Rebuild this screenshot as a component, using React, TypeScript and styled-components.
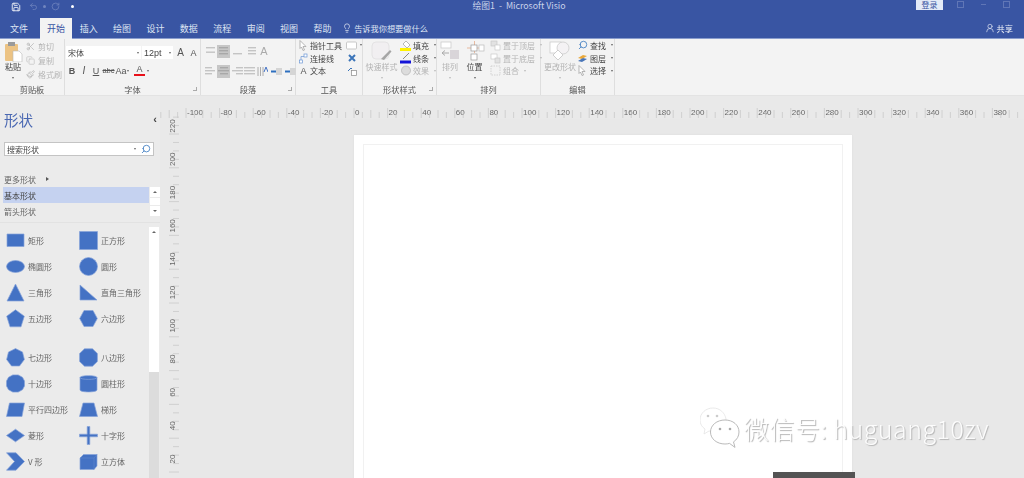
import React from 'react';
import styled, { createGlobalStyle } from 'styled-components';
import { Copy, Lightbulb, Paintbrush, RotateCw, Save, Scissors, Search, Undo2, UserRound } from 'lucide-react';

const Global = createGlobalStyle`
  html, body { margin: 0; padding: 0; background: #e8e8e8; }
  body { font-family: "Noto Sans CJK SC", "Noto Sans", sans-serif; overflow: hidden; }
`;

const Frame = styled.div`
  position: relative;
  width: 1024px;
  height: 478px;
  overflow: hidden;
  filter: blur(0.45px);
`;

// title bar
const TitleBar = styled.div`
  height: 18px;
  background: #3955a3;
  display: grid;
  grid-template-columns: 1fr auto 1fr;
  color: #fff;
`;
const Qat = styled.div`
  display: flex;
  align-items: center;
  gap: 5px;
  padding: 0 0 5px 11px;
`;
const QatDot = styled.span<{ $dim?: boolean; $ml?: number }>`
  width: 3px;
  height: 3px;
  margin-left: ${p => p.$ml ?? 0}px;
  border-radius: 50%;
  background: ${p => (p.$dim ? '#7186bf' : '#fff')};
`;
const SaveIcon = styled(Save)`
  margin-right: 3px;
`;
const Title = styled.div`
  padding-left: 14px;
  font-size: 8.8px;
  line-height: 11px;
  color: #c9d3ea;
  white-space: pre;
`;
const WindowBar = styled.div`
  display: flex;
  justify-content: flex-end;
  align-items: flex-start;
  padding-right: 6.5px;
`;
const Login = styled.div`
  width: 27px;
  height: 10px;
  margin-right: 5.5px;
  background: #e3eaf7;
  color: #3955a3;
  font-size: 8px;
  line-height: 10px;
  text-align: center;
`;
const WinBtn = styled.div`
  width: 23px;
  height: 8px;
  display: flex;
  justify-content: center;
  align-items: center;
`;
const WinGlyph = styled.span<{ $flat?: boolean }>`
  width: 5px;
  height: ${p => (p.$flat ? '0' : '5px')};
  border: 1px solid #6076b6;
  border-width: ${p => (p.$flat ? '1px 0 0' : '1px')};
`;

// tabs
const TabBar = styled.div`
  height: 20px;
  background: #3955a3;
  border-bottom: 1px solid #8a9dcd;
  display: flex;
  align-items: stretch;
  color: #dfe5f3;
  font-size: 9px;
`;
const Tab = styled.div<{ $active?: boolean; $w?: number }>`
  width: ${p => p.$w ?? 33.4}px;
  display: flex;
  align-items: center;
  justify-content: center;
  background: ${p => (p.$active ? '#f3f3f3' : 'transparent')};
  color: ${p => (p.$active ? '#3955a3' : '#dfe5f3')};
  margin-left: ${p => (p.$active ? '2px' : '0')};
  margin-bottom: ${p => (p.$active ? '-1px' : '0')};
`;
const Tell = styled.div`
  display: flex;
  align-items: center;
  gap: 2px;
  margin-left: 3px;
  color: #dfe5f3;
  font-size: 8.2px;
`;
const Share = styled.div`
  margin-left: auto;
  padding-right: 11px;
  display: flex;
  align-items: center;
  gap: 2px;
  font-size: 8.2px;
  color: #eef1f8;
`;

// ribbon
const Ribbon = styled.div`
  height: 57px;
  background: #f3f3f3;
  border-bottom: 1px solid #e3e3e3;
  box-sizing: border-box;
  display: flex;
`;
const GroupBox = styled.div<{ $w: number }>`
  position: relative;
  width: ${p => p.$w}px;
  flex: none;
  box-sizing: border-box;
  border-right: 1px solid #dedede;
  display: flex;
  flex-direction: column;
`;
const GroupBody = styled.div<{ $pad?: number; $gap?: number }>`
  height: 43px;
  padding-left: ${p => p.$pad ?? 0}px;
  display: flex;
  gap: ${p => p.$gap ?? 0}px;
`;
const GroupLabel = styled.div`
  flex: 1;
  display: flex;
  align-items: center;
  justify-content: center;
  font-size: 8.2px;
  color: #555;
`;
const Launcher = styled.span`
  position: absolute;
  right: 3px;
  bottom: 4px;
  width: 3px;
  height: 3px;
  border: solid #aaa;
  border-width: 0 1px 1px 0;
`;
const BigBtn = styled.div<{ $w: number; $off?: boolean }>`
  width: ${p => p.$w}px;
  flex: none;
  padding-top: 2px;
  display: flex;
  flex-direction: column;
  align-items: center;
  font-size: 8px;
  line-height: 10px;
  color: ${p => (p.$off ? '#b3b3b3' : '#444')};
  white-space: nowrap;
`;
const BigIcon = styled.div`
  height: 20px;
  margin-bottom: 1px;
  display: flex;
  align-items: center;
`;
const Caret = styled.span<{ $off?: boolean }>`
  width: 0;
  height: 0;
  margin-top: 5px;
  border: 1.5px solid transparent;
  border-top: 2px solid ${p => (p.$off ? '#bbb' : '#666')};
  border-bottom: 0;
`;
const SideCaret = styled(Caret)`
  margin: 0 0 0 3px;
`;
const InlineCaret = styled(Caret)`
  margin-top: 0;
`;
const SmallCol = styled.div<{ $rowH?: number; $w?: number; $ml?: number }>`
  --row: ${p => p.$rowH ?? 12.8}px;
  width: ${p => (p.$w ? `${p.$w}px` : 'auto')};
  margin-left: ${p => p.$ml ?? 0}px;
  flex: none;
  display: flex;
  flex-direction: column;
`;
const SmallRow = styled.div<{ $off?: boolean; $inset?: number }>`
  height: var(--row);
  padding-left: ${p => p.$inset ?? 0}px;
  display: flex;
  align-items: center;
  gap: 2px;
  font-size: 8px;
  white-space: nowrap;
  color: ${p => (p.$off ? '#b5b5b5' : '#444')};
`;
const IconCell = styled.span<{ $w?: number }>`
  width: ${p => p.$w ?? 11}px;
  height: 12px;
  flex: none;
  display: flex;
  align-items: center;
  justify-content: center;
`;
const MirrorSearch = styled(Search)`
  transform: scaleX(-1);
`;

// font group
const FontCol = styled.div`
  padding: 7px 0 0 1px;
  display: flex;
  flex-direction: column;
  gap: 5px;
`;
const FontRow = styled.div`
  height: 13px;
  display: flex;
  align-items: center;
`;
const Combo = styled.div<{ $w: number; $latin?: boolean }>`
  width: ${p => p.$w}px;
  height: 13px;
  margin-right: 1px;
  padding: 0 2px;
  box-sizing: border-box;
  background: #fff;
  display: flex;
  align-items: center;
  justify-content: space-between;
  font-family: ${p => (p.$latin ? '"Liberation Sans", sans-serif' : 'inherit')};
  font-size: ${p => (p.$latin ? 9 : 8)}px;
  color: #444;
`;
const Glyph = styled.span<{ $w: number; $b?: boolean; $i?: boolean; $u?: boolean; $s?: boolean; $size?: number; $off?: boolean }>`
  width: ${p => p.$w}px;
  flex: none;
  text-align: center;
  font-family: "Liberation Sans", sans-serif;
  font-size: ${p => p.$size ?? 9}px;
  font-weight: ${p => (p.$b ? 700 : 400)};
  font-style: ${p => (p.$i ? 'italic' : 'normal')};
  text-decoration: ${p => (p.$u ? 'underline' : p.$s ? 'line-through' : 'none')};
  color: ${p => (p.$off ? '#aaa' : '#555')};
`;
const ColorA = styled.span`
  width: 11px;
  margin: 0 2px 0 5px;
  display: flex;
  flex-direction: column;
  align-items: center;
  font: 9px/9px "Liberation Sans", sans-serif;
  color: #555;
  border-bottom: 2px solid #e8111a;
`;

// paragraph group
const ParaCol = styled.div`
  padding: 5px 0 0 3px;
  display: flex;
  flex-direction: column;
  gap: 6px;
`;
const ParaRow = styled.div`
  height: 14px;
  display: flex;
  align-items: center;
  gap: 1px;
`;
const ParaBtn = styled.span<{ $on?: boolean; $w?: number }>`
  width: ${p => p.$w ?? 12}px;
  height: 13px;
  flex: none;
  display: flex;
  align-items: center;
  justify-content: center;
  background: ${p => (p.$on ? '#c6c6c6' : 'transparent')};
`;

// main area
const Main = styled.div`
  display: flex;
  height: 382px;
`;
const Sidebar = styled.aside`
  width: 160px;
  flex: none;
  background: #ebebeb;
  display: flex;
  flex-direction: column;
`;
const SideHead = styled.div`
  height: 46px;
  padding: 0 2px 0 4px;
  display: flex;
  justify-content: space-between;
  align-items: center;
  font-size: 14.5px;
  color: #4a68b2;
  box-sizing: border-box;
`;
const Collapse = styled.span`
  font: 700 11px "Liberation Sans", sans-serif;
  color: #444;
  padding-right: 1px;
`;
const SearchBox = styled.div`
  width: 150px;
  height: 14px;
  margin-left: 4px;
  box-sizing: border-box;
  padding: 0 2px;
  background: #fff;
  border: 1px solid #c4c4c4;
  display: flex;
  align-items: center;
  font-size: 8px;
  color: #444;
`;
const SearchCaret = styled(Caret)`
  margin: 0 5px 0 auto;
`;
const MoreRow = styled.div`
  height: 16px;
  margin-top: 15px;
  padding-left: 4px;
  display: flex;
  align-items: center;
  gap: 10px;
  font-size: 8px;
  color: #666;
`;
const SideArrow = styled.span`
  width: 0;
  height: 0;
  border: 2px solid transparent;
  border-left: 3px solid #555;
  border-right: 0;
`;
const StencilList = styled.div`
  height: 32px;
  display: flex;
`;
const StencilNames = styled.div`
  width: 146px;
  margin-left: 3px;
`;
const StencilName = styled.div<{ $on?: boolean }>`
  height: 16px;
  padding-left: 1px;
  display: flex;
  align-items: center;
  background: ${p => (p.$on ? '#c5d2f0' : 'transparent')};
  color: ${p => (p.$on ? '#444' : '#666')};
  font-size: 8px;
`;
const MiniScroll = styled.div`
  width: 10px;
  margin-left: 1px;
  height: 29px;
  display: flex;
  flex-direction: column;
  justify-content: space-between;
  background: linear-gradient(#fff, #fff) center / 100% 7px no-repeat;
`;
const ScrollBtn = styled.span`
  height: 10px;
  background: #fff;
  display: flex;
  align-items: center;
  justify-content: center;
`;
const Tri = styled.span<{ $down?: boolean }>`
  width: 0;
  height: 0;
  border: 2.5px solid transparent;
  ${p => (p.$down ? 'border-top: 2.5px solid #666; border-bottom: 0;' : 'border-bottom: 2.5px solid #666; border-top: 0;')}
`;
const ShapeArea = styled.div`
  margin-top: 3px;
  border-top: 1px solid #e2e2e2;
  padding-top: 4px;
  display: flex;
  flex: 1;
  min-height: 0;
`;
const ShapeGrid = styled.div`
  width: 149px;
  flex: none;
  margin-top: 1px;
`;
const ShapeSection = styled.div<{ $sep?: boolean }>`
  display: grid;
  grid-template-columns: 73px 73px;
  grid-auto-rows: 25.9px;
  padding-left: 6px;
  padding-bottom: ${p => (p.$sep ? '13px' : '0')};
`;
const ShapeItem = styled.div`
  display: flex;
  align-items: center;
  gap: 3px;
  font-size: 8px;
  color: #666;
  white-space: nowrap;
`;
const ShapeIcon = styled.svg`
  flex: none;
`;
const StencilScroll = styled.div`
  width: 10px;
  flex: none;
  background: linear-gradient(#fff 0 145px, #dcdcdc 145px);
`;
const Workspace = styled.div`
  flex: 1;
  display: flex;
  flex-direction: column;
  position: relative;
  background: #e9e9e9;
`;
const RulerTop = styled.svg`
  display: block;
  flex: none;
`;
const WorkRow = styled.div`
  flex: 1;
  display: flex;
  min-height: 0;
`;
const RulerLeft = styled.svg`
  display: block;
  flex: none;
  overflow: visible;
`;
const Canvas = styled.div`
  flex: 1;
  position: relative;
  padding: 16px 0 0 174px;
  background: #e8e8e8;
`;
const Page = styled.div`
  width: 498px;
  height: 400px;
  background: #fff;
  padding: 9px;
  box-sizing: border-box;
  box-shadow: 0 0 2px #dcdcdc;
`;
const PageInner = styled.div`
  height: 100%;
  border: 1px solid #f1f1f1;
`;
const DarkTip = styled.div`
  position: absolute;
  left: 593px;
  bottom: 0;
  width: 82px;
  height: 6px;
  background: #545454;
`;
const Watermark = styled.div`
  position: absolute;
  left: 700px;
  top: 406px;
  display: flex;
  align-items: center;
  gap: 4px;
  height: 44px;
`;
const WatermarkText = styled.span`
  font-family: "Noto Sans CJK SC", sans-serif;
  font-weight: 300;
  font-size: 25px;
  letter-spacing: 0.5px;
  color: rgba(255, 255, 255, 0.9);
  text-shadow: 1px 1px 1px #b4b4b4;
  white-space: nowrap;
`;

const BLUE = '#4472c4';
const EDGE = '#86a3da';

const Shape = ({ d, el }: { d?: string; el?: React.ReactNode }) => (
  <ShapeIcon width="19" height="19" viewBox="0 0 19 19">
    {d ? <path d={d} fill={BLUE} stroke={EDGE} strokeWidth="0.7" /> : el}
  </ShapeIcon>
);

const shapes: { name: string; d?: string; el?: React.ReactNode }[][] = [
  [
    { name: '矩形', d: 'M1 3h17v12.5H1z' },
    { name: '正方形', d: 'M.5 .5h18v18H.5z' },
    { name: '椭圆形', el: <ellipse cx="9.5" cy="9.5" rx="9" ry="6" fill={BLUE} stroke={EDGE} strokeWidth="0.7" /> },
    { name: '圆形', el: <circle cx="9.5" cy="9.5" r="9" fill={BLUE} stroke={EDGE} strokeWidth="0.7" /> },
    { name: '三角形', d: 'M9.5 1L18 18H1z' },
    { name: '直角三角形', d: 'M1 2L18 17H1z' },
    { name: '五边形', d: 'M9.5 .8L18.3 7.2 15 17.8H4L.7 7.2z' },
    { name: '六边形', d: 'M5 1.5H14L18.3 9.5 14 17.5H5L.7 9.5z' },
  ],
  [
    { name: '七边形', d: 'M9.5 .6L16.5 4 18.4 11.5 13.5 18H5.5L.6 11.5 2.5 4z' },
    { name: '八边形', d: 'M5.5 .8H13.5L18.4 5.5V13.5L13.5 18.2H5.5L.6 13.5V5.5z' },
    { name: '十边形', d: 'M6.8 .9H12.2L16.5 3.3 18.5 7V12L16.5 15.7 12.2 18.1H6.8L2.5 15.7 .5 12V7L2.5 3.3z' },
    { name: '圆柱形', el: <g fill={BLUE} stroke={EDGE} strokeWidth="0.7"><path d="M1 3.5C1 1 18 1 18 3.5V16C18 18.6 1 18.6 1 16z" /><path d="M1 3.5C1 6 18 6 18 3.5" fill="none" /></g> },
    { name: '平行四边形', d: 'M3.5 3H18.5L16 16.5H.5z' },
    { name: '梯形', d: 'M4 3H15L18.5 16.5H.5z' },
    { name: '菱形', d: 'M9.5 3.2L18.5 9.5 9.5 15.8 .5 9.5z' },
    { name: '十字形', d: 'M8.2 .5H10.8V8.2H18.5V10.8H10.8V18.5H8.2V10.8H.5V8.2H8.2z' },
    { name: 'V 形', d: 'M.5 .8L10 .8 18.5 9.5 10 18.2H.5L8.5 9.5z' },
    { name: '立方体', el: <g fill={BLUE} stroke={EDGE} strokeWidth="0.7"><path d="M1 6L4.5 2.5H18V14L15 17.5H1z" /><path d="M1 6H15V17.5M15 6L18 2.5" fill="none" stroke="#5d85cd" /></g> },
  ],
];

const Bars = ({ rows, color = '#c4c4c4' }: { rows: [number, number][]; color?: string }) => (
  <svg width="11" height="11" viewBox="0 0 11 11">
    {rows.map(([x, w], i) => (
      <rect key={i} x={x} y={1 + i * (9 / rows.length)} width={w} height="1.4" fill={color} />
    ))}
  </svg>
);

const Tiny = ({ children, w = 11, h = 11 }: { children: React.ReactNode; w?: number; h?: number }) => (
  <svg width={w} height={h} viewBox={`0 0 ${w} ${h}`}>{children}</svg>
);

const hTicks = () => {
  const out: React.ReactNode[] = [];
  for (let u = -115; u <= 395; u += 5) {
    const x = 194 + u * 1.68;
    const major = u % 20 === 0;
    const mid = u % 10 === 0;
    out.push(<line key={u} x1={x} x2={x} y1={major ? 12 : mid ? 14 : 16} y2={22} stroke="#c9c9c9" strokeWidth="0.8" />);
    if (major) {
      out.push(
        <text key={`t${u}`} x={x + 1} y={19} fontSize="8" fill="#666" fontFamily="Liberation Sans, sans-serif">
          {u}
        </text>,
      );
    }
  }
  return out;
};

const vTicks = () => {
  const out: React.ReactNode[] = [];
  for (let k = -2; k < 45; k++) {
    const y = 15 + k * 8.45;
    const major = k % 4 === 0;
    out.push(<line key={k} x1={major ? 9 : 13} x2={19} y1={y} y2={y} stroke="#c9c9c9" strokeWidth="0.8" />);
  }
  ['220', '200', '180', '160', '140', '120', '100', '80', '60', '40', '20'].forEach((t, i) => {
    const cy = 7 + i * 33.3;
    out.push(
      <text key={t} x={0} y={0} transform={`translate(14.5 ${cy}) rotate(-90)`} textAnchor="middle" fontSize="8" fill="#666" fontFamily="Liberation Sans, sans-serif">
        {t}
      </text>,
    );
  });
  return out;
};

const Group = ({ w, label, launcher, pad, gap, children }: { w: number; label: string; launcher?: boolean; pad?: number; gap?: number; children: React.ReactNode }) => (
  <GroupBox $w={w}>
    <GroupBody $pad={pad} $gap={gap}>{children}</GroupBody>
    <GroupLabel>{label}</GroupLabel>
    {launcher && <Launcher />}
  </GroupBox>
);

const App = () => (
  <Frame>
    <Global />
    <TitleBar>
      <Qat>
        <SaveIcon size={10} color="#fff" strokeWidth={2} />
        <Undo2 size={9} color="#7186bf" />
        <QatDot $dim />
        <RotateCw size={9} color="#7186bf" />
        <QatDot $ml={6} />
      </Qat>
      <Title>绘图1  -  Microsoft Visio</Title>
      <WindowBar>
        <Login>登录</Login>
        <WinBtn><WinGlyph /></WinBtn>
        <WinBtn><WinGlyph $flat /></WinBtn>
        <WinBtn><WinGlyph /></WinBtn>
      </WindowBar>
    </TitleBar>

    <TabBar>
      <Tab $w={38}>文件</Tab>
      <Tab $active $w={32}>开始</Tab>
      {['插入', '绘图', '设计', '数据', '流程', '审阅', '视图', '帮助'].map(t => (
        <Tab key={t}>{t}</Tab>
      ))}
      <Tell>
        <Lightbulb size={10} color="#fff" strokeWidth={1.5} />
        告诉我你想要做什么
      </Tell>
      <Share>
        <UserRound size={10} color="#eef1f8" strokeWidth={1.5} />
        共享
      </Share>
    </TabBar>

    <Ribbon>
      <Group w={65} label="剪贴板" pad={1}>
        <BigBtn $w={24}>
          <BigIcon>
            <Tiny w={20} h={21}>
              <rect x="2" y="3" width="13" height="17" rx="1" fill="#ecc384" />
              <rect x="5" y="1" width="7" height="4" fill="#9a9a9a" />
              <path d="M10 10h6l3 3v8h-9z" fill="#fff" stroke="#bbb" strokeWidth="0.6" />
            </Tiny>
          </BigIcon>
          粘贴
          <Caret />
        </BigBtn>
        <SmallCol $rowH={15}>
          <SmallRow $off><IconCell><Scissors size={9} color="#b5b5b5" /></IconCell>剪切</SmallRow>
          <SmallRow $off><IconCell><Copy size={9} color="#c4c4c4" /></IconCell>复制</SmallRow>
          <SmallRow $off><IconCell><Paintbrush size={9} color="#b5b5b5" /></IconCell>格式刷</SmallRow>
        </SmallCol>
      </Group>

      <Group w={136} label="字体" launcher>
        <FontCol>
          <FontRow>
            <Combo $w={75}>宋体<InlineCaret /></Combo>
            <Combo $w={31} $latin>12pt<InlineCaret /></Combo>
            <Glyph $w={13} $size={10}>A</Glyph>
            <Glyph $w={13} $size={9}>A</Glyph>
          </FontRow>
          <FontRow>
            <Glyph $w={12} $b>B</Glyph>
            <Glyph $w={12} $i $size={10}>I</Glyph>
            <Glyph $w={12} $u>U</Glyph>
            <Glyph $w={13} $s $size={7.5}>abc</Glyph>
            <Glyph $w={12}>Aa</Glyph>
            <InlineCaret />
            <ColorA>A</ColorA>
            <InlineCaret />
          </FontRow>
        </FontCol>
      </Group>

      <Group w={95} label="段落" launcher>
        <ParaCol>
          <ParaRow>
            <ParaBtn><Bars rows={[[1, 9], [1, 9]]} /></ParaBtn>
            <ParaBtn $on $w={13}><Bars rows={[[1, 9], [1, 9], [1, 9]]} color="#a8a8a8" /></ParaBtn>
            <ParaBtn><Bars rows={[[0, 0], [0, 0], [1, 9]]} /></ParaBtn>
            <ParaBtn><Bars rows={[[3, 8], [3, 8], [3, 8]]} /></ParaBtn>
            <ParaBtn $w={14}><Glyph $w={14} $size={11} $off>A</Glyph></ParaBtn>
          </ParaRow>
          <ParaRow>
            <ParaBtn><Bars rows={[[0, 7], [0, 10], [0, 7]]} /></ParaBtn>
            <ParaBtn $on $w={13}><Bars rows={[[2, 8], [0, 11], [2, 8]]} color="#a8a8a8" /></ParaBtn>
            <ParaBtn><Bars rows={[[4, 7], [0, 11], [4, 7]]} /></ParaBtn>
            <ParaBtn $w={11}><Bars rows={[[0, 11], [0, 11], [0, 11]]} /></ParaBtn>
            <ParaBtn $w={13}>
              <Tiny><path d="M1 1v9M3.5 1v9M6 1v9" stroke="#999" strokeWidth="0.8" /><path d="M7 6l2-5 2 5" fill="none" stroke="#4472c4" /></Tiny>
            </ParaBtn>
            <ParaBtn $w={13}>
              <Tiny><rect x="5" y="2" width="6" height="7" fill="#d5d5d5" /><path d="M0 5.5h5" stroke="#2d6fbf" strokeWidth="2" /></Tiny>
            </ParaBtn>
            <ParaBtn $w={12}>
              <Tiny><rect x="5" y="2" width="6" height="7" fill="#d5d5d5" /><path d="M0 5.5h5" stroke="#2d6fbf" strokeWidth="2" /></Tiny>
            </ParaBtn>
          </ParaRow>
        </ParaCol>
      </Group>

      <Group w={67} label="工具" pad={3}>
        <SmallCol $w={47}>
          <SmallRow>
            <IconCell $w={9}><Tiny w={9}><path d="M1 .5l6 6H4l1.5 3.5-1.5.5L2.5 7 1 8.5z" fill="#fff" stroke="#999" strokeWidth="0.7" /></Tiny></IconCell>
            指针工具
          </SmallRow>
          <SmallRow>
            <IconCell $w={9}><Tiny w={9}><rect x=".5" y="7" width="3" height="3" fill="#fff" stroke="#6b96d4" strokeWidth="0.7" /><path d="M2 7V3.5h3" fill="none" stroke="#6b96d4" strokeWidth="0.7" /><rect x="5" y="1" width="3" height="3" fill="#fff" stroke="#6b96d4" strokeWidth="0.7" /></Tiny></IconCell>
            连接线
          </SmallRow>
          <SmallRow>
            <Glyph $w={9} $size={9}>A</Glyph>
            文本
          </SmallRow>
        </SmallCol>
        <SmallCol $w={16}>
          <SmallRow>
            <Tiny w={12} h={9}><rect x=".5" y="1" width="10" height="7" rx="1" fill="#fff" stroke="#bbb" strokeWidth="0.8" /></Tiny>
            <InlineCaret />
          </SmallRow>
          <SmallRow $inset={1}>
            <Tiny w={10} h={10}><path d="M2 2l6 6M8 2L2 8" stroke="#3b74b8" strokeWidth="2" /></Tiny>
          </SmallRow>
          <SmallRow $inset={1}>
            <Tiny w={10} h={10}><rect x="4.5" y="4.5" width="5" height="5" fill="#fff" stroke="#888" strokeWidth="0.7" /><path d="M1 5l3-3 1 1" fill="none" stroke="#3b74b8" /></Tiny>
          </SmallRow>
        </SmallCol>
      </Group>

      <Group w={74} label="形状样式" launcher pad={1} gap={1}>
        <BigBtn $w={35} $off>
          <BigIcon>
            <Tiny w={22} h={20}>
              <rect x="1" y="1" width="17" height="17" rx="4" fill="#f1eff1" stroke="#dcdcdc" strokeWidth="0.7" />
              <path d="M10 18l9-9 1.5 1.5L13 19z" fill="#a5a5a5" />
            </Tiny>
          </BigIcon>
          快速样式
          <Caret $off />
        </BigBtn>
        <SmallCol $w={36}>
          <SmallRow>
            <IconCell>
              <Tiny h={12}><path d="M3 5l3-3 4 4-3 3z" fill="#fff" stroke="#999" strokeWidth="0.7" /><rect y="9" width="11" height="3" fill="#fff200" /></Tiny>
            </IconCell>
            填充<SideCaret />
          </SmallRow>
          <SmallRow>
            <IconCell>
              <Tiny h={12}><path d="M3 7l6-6" stroke="#888" /><rect y="8.5" width="11" height="3" fill="#1414d8" /></Tiny>
            </IconCell>
            线条<SideCaret />
          </SmallRow>
          <SmallRow $off>
            <IconCell><Tiny><circle cx="6" cy="5.5" r="4.5" fill="#dcdcdc" stroke="#aaa" strokeWidth="0.6" /></Tiny></IconCell>
            效果<SideCaret $off />
          </SmallRow>
        </SmallCol>
      </Group>

      <Group w={104} label="排列" pad={1}>
        <BigBtn $w={24} $off>
          <BigIcon>
            <Tiny w={20} h={20}>
              <rect x="1" y="1" width="10" height="6" fill="#fff" stroke="#ccc" strokeWidth="0.8" />
              <rect x="10" y="9" width="9" height="9" fill="#d9d5d9" />
              <path d="M2 12h7M2 12l3-2.5M2 12l3 2.5" fill="none" stroke="#aaa" />
            </Tiny>
          </BigIcon>
          排列
          <Caret $off />
        </BigBtn>
        <BigBtn $w={25}>
          <BigIcon>
            <Tiny w={20} h={20}>
              <path d="M9.5 0v12M2 7h16" stroke="#e2a27c" strokeWidth="0.7" />
              <rect x="6" y="4" width="6" height="6" fill="#fff" stroke="#999" strokeWidth="0.7" />
              <rect x="14" y="4" width="5" height="6" fill="#fff" stroke="#bbb" strokeWidth="0.7" />
              <rect x="6" y="13" width="6" height="6" fill="#fff" stroke="#999" strokeWidth="0.7" />
            </Tiny>
          </BigIcon>
          位置
          <Caret />
        </BigBtn>
        <SmallCol $w={52} $ml={2}>
          <SmallRow $off>
            <IconCell $w={12}><Tiny><rect x="1" y="1" width="6" height="5" fill="#e2e2e2" stroke="#c4c4c4" strokeWidth="0.6" /><rect x="5" y="5" width="5" height="5" fill="#fff" stroke="#c4c4c4" strokeWidth="0.6" /></Tiny></IconCell>
            置于顶层<SideCaret $off />
          </SmallRow>
          <SmallRow $off>
            <IconCell $w={12}><Tiny><rect x="1" y="1" width="6" height="5" fill="#fff" stroke="#c4c4c4" strokeWidth="0.6" /><rect x="5" y="5" width="5" height="5" fill="#e2e2e2" stroke="#c4c4c4" strokeWidth="0.6" /></Tiny></IconCell>
            置于底层<SideCaret $off />
          </SmallRow>
          <SmallRow $off>
            <IconCell $w={12}><Tiny><rect x="1" y="1" width="9" height="9" fill="none" stroke="#c4c4c4" strokeWidth="0.7" strokeDasharray="1.5 1" /></Tiny></IconCell>
            组合<SideCaret $off />
          </SmallRow>
        </SmallCol>
      </Group>

      <Group w={74} label="编辑" pad={2}>
        <BigBtn $w={34} $off>
          <BigIcon>
            <Tiny w={22} h={20}>
              <rect x="1" y="1" width="11" height="11" fill="#fff" stroke="#ccc" strokeWidth="0.8" />
              <circle cx="14" cy="7" r="6" fill="#f4f2f4" stroke="#ccc" strokeWidth="0.8" />
              <path d="M9 9l5 5-5 5-5-5z" fill="#fff" stroke="#c4c4c4" strokeWidth="0.8" />
            </Tiny>
          </BigIcon>
          更改形状
          <Caret $off />
        </BigBtn>
        <SmallCol $w={36}>
          <SmallRow><IconCell><MirrorSearch size={10} color="#3d7cc0" /></IconCell>查找<SideCaret /></SmallRow>
          <SmallRow>
            <IconCell><Tiny><path d="M1 5l5-3 4 1-5 3z" fill="#e9a83b" /><path d="M1 8l5-3 4 1-5 3z" fill="#4a76b8" /></Tiny></IconCell>
            图层<SideCaret />
          </SmallRow>
          <SmallRow>
            <IconCell><Tiny><path d="M2 .5l6 6H5l1.5 3.5-1.5.5L3.5 7 2 8.5z" fill="#fff" stroke="#999" strokeWidth="0.7" /></Tiny></IconCell>
            选择<SideCaret />
          </SmallRow>
        </SmallCol>
      </Group>
    </Ribbon>

    <Main>
      <Sidebar>
        <SideHead>
          形状
          <Collapse>‹</Collapse>
        </SideHead>
        <SearchBox>
          搜索形状
          <SearchCaret />
          <MirrorSearch size={10} color="#3d7cc0" />
        </SearchBox>
        <MoreRow>
          更多形状
          <SideArrow />
        </MoreRow>
        <StencilList>
          <StencilNames>
            <StencilName $on>基本形状</StencilName>
            <StencilName>箭头形状</StencilName>
          </StencilNames>
          <MiniScroll>
            <ScrollBtn><Tri /></ScrollBtn>
            <ScrollBtn><Tri $down /></ScrollBtn>
          </MiniScroll>
        </StencilList>
        <ShapeArea>
          <ShapeGrid>
            {shapes.map((section, i) => (
              <ShapeSection key={i} $sep={i === 0}>
                {section.map(s => (
                  <ShapeItem key={s.name}>
                    <Shape d={s.d} el={s.el} />
                    {s.name}
                  </ShapeItem>
                ))}
              </ShapeSection>
            ))}
          </ShapeGrid>
          <StencilScroll>
            <ScrollBtn><Tri /></ScrollBtn>
          </StencilScroll>
        </ShapeArea>
      </Sidebar>

      <Workspace>
        <RulerTop width="864" height="23" viewBox="0 0 864 23">{hTicks()}</RulerTop>
        <WorkRow>
          <RulerLeft width="20" height="359" viewBox="0 0 20 359">{vTicks()}</RulerLeft>
          <Canvas>
            <Page><PageInner /></Page>
            <DarkTip />
          </Canvas>
        </WorkRow>
      </Workspace>
    </Main>

    <Watermark>
      <svg width="40" height="44" viewBox="0 0 40 44">
        <path d="M13 2C6 2 0 7 0 14c0 4 2 7 5 9l-1 5 5-3c2 .6 4 1 6 .9C22 26 27 20 26 13 25 7 20 2 13 2z" fill="#fff" stroke="#e4e4e4" strokeWidth="0.8" />
        <path d="M25 14c-8 0-14.500 5-14.500 12S17 38 25 38c1.600 0 3-.2 4.500-.6l5.500 4-1.500-5.500c3.500-2.200 5.500-5.900 5.500-9.900 0-7-6-12-14-12z" fill="#fff" stroke="#b2b2b2" strokeWidth="0.9" />
        <circle cx="20" cy="23" r="1.300" fill="#aaa" />
        <circle cx="30" cy="23" r="1.300" fill="#aaa" />
        <circle cx="8" cy="10" r="1.300" fill="#ccc" />
        <circle cx="17" cy="10" r="1.300" fill="#ccc" />
      </svg>
      <WatermarkText>微信号: huguang10zv</WatermarkText>
    </Watermark>
  </Frame>
);

export default App;
